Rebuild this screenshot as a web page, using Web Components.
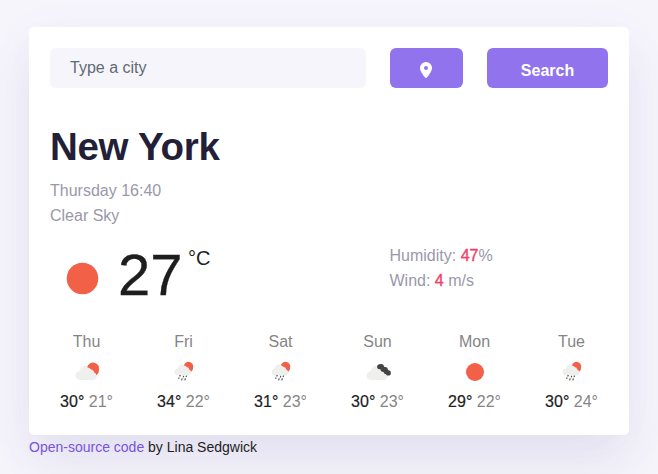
<!DOCTYPE html>
<html lang="en">
<head>
<meta charset="utf-8">
<title>Weather</title>
<style>
html,body{margin:0;height:100%;overflow:hidden}
body{background:#f6f5fc;font:16px/25px "Liberation Sans",Arial,sans-serif;color:#1e1e1e}
</style>
</head>
<body>
<weather-app></weather-app>
<script>
function define(name, markup) {
  customElements.define(name, class extends HTMLElement {
    connectedCallback() {
      if (this.shadowRoot) return;
      const root = this.attachShadow({mode: 'open'});
      root.innerHTML = typeof markup === 'function' ? markup(this) : markup;
    }
  });
}

const cloud = '<path fill="#efefee" d="M7 22a4.400 4.400 0 0 1-.4-8.800A5.500 5.500 0 0 1 12.300 8a5.500 5.500 0 0 1 3.700 1.400 6 6 0 0 1 5 4.600A4.200 4.200 0 0 1 20.500 22z"/>';
const halfSun = '<path fill="#f26048" d="M14.200 9.200A6 6 0 0 1 26 11.900 6.200 6.200 0 0 1 23.500 17.200 4.500 4.500 0 0 0 21.300 14.600 4.600 4.600 0 0 0 17.800 11.300 5 5 0 0 0 14.200 9.200z"/>';
const icons = {
  clear: '<circle cx="14" cy="14" r="9" fill="#f26048"/>',
  few: cloud + halfSun,
  rain: `<g transform="translate(2.850 .3) scale(.78)">${cloud}${halfSun}</g>
    <g stroke="#444" stroke-width="1.100"><path d="M10.300 17l-.6 1.500M13.700 17.800l-.5 1.500M16.600 17.600l-.6 1.500M9.100 19.500l-.5 1.300M12.200 20.300l-.6 2M15.400 20.300l-.6 2"/></g>`,
  broken: `${cloud}<g fill="#444446"><circle cx="15.600" cy="8.800" r="2.500"/><circle cx="17.300" cy="8.700" r="2.600"/><circle cx="19.300" cy="11.200" r="2.700"/><circle cx="21.200" cy="11.600" r="2.600"/><circle cx="22.200" cy="13.500" r="2.600"/><circle cx="24.300" cy="14.900" r="2.600"/></g>`
};

define('weather-icon', el => `<style>
  :host{display:block;width:28px;height:28px}
  svg{display:block;width:100%;height:100%}
</style><svg viewBox="0 0 28 28">${icons[el.getAttribute('kind')]}</svg>`);

define('weather-button', `<style>
  :host{display:flex;align-items:center;justify-content:center;height:40px;box-sizing:border-box;
    border-radius:6px;background:#9174ed;color:#fff;font-weight:700;padding-top:5px}
</style><slot></slot>`);

define('weather-search', `<style>
  :host{display:grid;grid-template-columns:316px 73px 121px;column-gap:24px}
  .field{height:40px;box-sizing:border-box;padding:7px 20px;border-radius:6px;background:#f6f5fc;color:#5f6b70}
  weather-button svg{width:12px;height:16px;margin-right:1px;margin-bottom:1px}
</style>
<div class="field">Type a city</div>
<weather-button><svg viewBox="0 0 12 16"><path fill="#fff" fill-rule="evenodd" d="M6 0a6 6 0 0 0-6 6c0 3.200 4 8.400 5.400 9.800a.8.8 0 0 0 1.200 0C8 14.400 12 9.200 12 6a6 6 0 0 0-6-6zm0 4a2 2 0 1 1 0 4 2 2 0 0 1 0-4z"/></svg></weather-button>
<weather-button>Search</weather-button>`);

define('weather-place', `<style>
  :host{display:block;margin-top:35px;color:#9a98a8}
  h1{margin:0 0 7px;font-size:38.500px;letter-spacing:-.3px;line-height:48px;color:#231f39}
</style><h1><slot name="city"></slot></h1><slot></slot>`);

define('weather-current', `<style>
  :host{display:grid;grid-template-columns:339.500px 1fr;margin-top:15px;height:75px}
  .now{display:flex}
  weather-icon{width:49px;height:49px;margin:11px 0 0 8px}
  .temp{font-size:58px;line-height:63px;margin-left:11px;-webkit-text-stroke:.3px}
  .unit{font-size:20px;line-height:30px;margin-left:5.500px}
  .facts{color:#9a98a8}
  b{font-weight:400;color:#f0426c;-webkit-text-stroke:.4px}
</style>
<div class="now"><weather-icon kind="clear"></weather-icon><span class="temp">27</span><span class="unit">°C</span></div>
<div class="facts"><div>Humidity: <b>47</b>%</div><div>Wind: <b>4</b> m/s</div></div>`);

define('weather-day', el => `<style>
  :host{display:flex;flex-direction:column;align-items:center;color:#858585}
  weather-icon{margin:4px 0 3px 1px}
  b{font-weight:400;color:#1e1e1e;-webkit-text-stroke:.2px}
</style>
<span>${el.getAttribute('day')}</span>
<weather-icon kind="${el.getAttribute('kind')}"></weather-icon>
<span><b>${el.getAttribute('high')}°</b> ${el.getAttribute('low')}°</span>`);

const days = [['Thu','few',30,21],['Fri','rain',34,22],['Sat','rain',31,23],['Sun','broken',30,23],['Mon','clear',29,22],['Tue','rain',30,24]];
define('weather-forecast', `<style>
  :host{display:grid;grid-template-columns:repeat(6,1fr);margin:11px -12px 0}
</style>${days.map(d => `<weather-day day="${d[0]}" kind="${d[1]}" high="${d[2]}" low="${d[3]}"></weather-day>`).join('')}`);

define('weather-card', `<style>
  :host{display:block;box-sizing:border-box;width:600px;height:408px;padding:21px;background:#fff;
    border-radius:5px;box-shadow:0 30px 50px rgba(65,50,100,.08),0 10px 50px rgba(145,116,237,.05)}
</style><slot></slot>`);

define('weather-app', `<style>
  :host{display:block;padding:27px 29px 0}
  footer{position:relative;font-size:14px;line-height:24px}
  a{color:#7853e0;text-decoration:none}
</style>
<weather-card>
  <weather-search></weather-search>
  <weather-place><span slot="city">New York</span><div>Thursday 16:40</div><div>Clear Sky</div></weather-place>
  <weather-current></weather-current>
  <weather-forecast></weather-forecast>
</weather-card>
<footer><a>Open-source code</a> by Lina Sedgwick</footer>`);
</script>
</body>
</html>
